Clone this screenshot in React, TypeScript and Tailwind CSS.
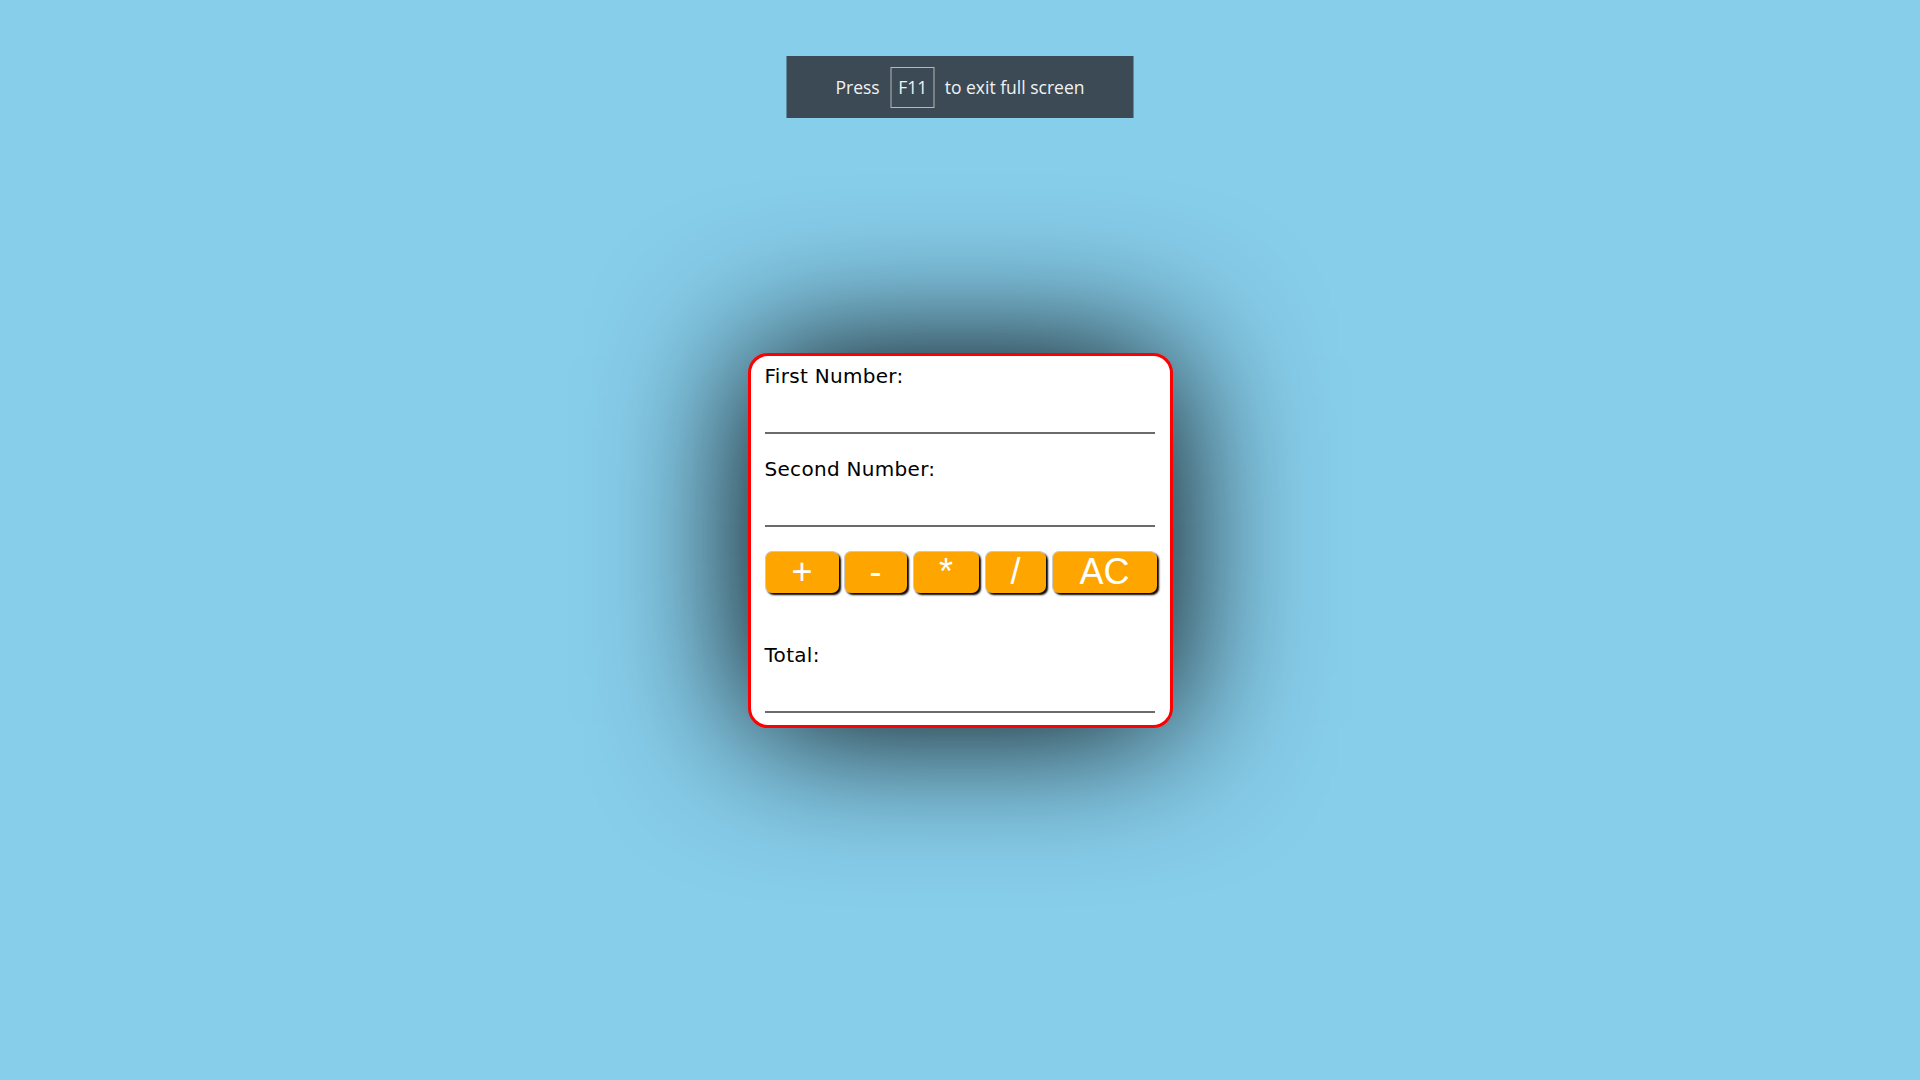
import React from "react";

export default function App() {
  const label = "block h-[23px] leading-[21px] text-[20px] tracking-[0.3px] text-black [font-family:'DejaVu_Sans',Verdana,sans-serif]";
  const input = "block w-[390px] h-[45px] border-0 border-b-2 border-[#6b6b6b] bg-transparent outline-none";
  const btn = "h-[42px] shrink-0 rounded-[7px] bg-[#FFA500] text-white text-[36px] leading-none [font-family:'Liberation_Sans',Arial,sans-serif] border-t border-l border-[#c9c9c9] shadow-[2px_2px_2px_#000] flex items-center justify-center";
  return (
    <div className="relative min-h-screen w-full overflow-hidden bg-[#87CEEB] flex items-center justify-center">
      <div className="absolute top-[56px] left-1/2 -translate-x-1/2 z-20 w-[347px] h-[62px] bg-[#3b4a55] flex items-center justify-center text-[#f2f2f2] text-[17.5px] [font-family:'Open_Sans',sans-serif]">
        <span>Press</span>
        <span className="ml-[11px] w-[44px] h-[41px] border border-[#b8b8b8] flex items-center justify-center">F11</span>
        <span className="ml-[10px]">to exit full screen</span>
      </div>

      <div className="relative w-[425px] h-[375px]">
        <div className="absolute inset-0 rounded-[20px] bg-black blur-[75px]" />
        <div className="relative w-[425px] h-[375px] bg-white border-[3px] border-[#ff0000] rounded-[20px] pt-[10px] pl-[14px] pr-[15px] pb-[12px]">
          <label className={label}>First Number:</label>
          <input className={input} type="text" />
          <label className={label + " mt-[25px]"}>Second Number:</label>
          <input className={input} type="text" />
          <div className="mt-[24px] flex w-[400px]">
            <button className={btn + " w-[74px]"}>+</button>
            <button className={btn + " w-[63px] ml-[5px]"}>-</button>
            <button className={btn + " w-[66px] ml-[6px]"}>*</button>
            <button className={btn + " w-[61px] ml-[6px]"}>/</button>
            <button className={btn + " w-[105px] ml-[6px]"}>AC</button>
          </div>
          <label className={label + " mt-[52px]"}>Total:</label>
          <input className={input} type="text" />
        </div>
      </div>
    </div>
  );
}
